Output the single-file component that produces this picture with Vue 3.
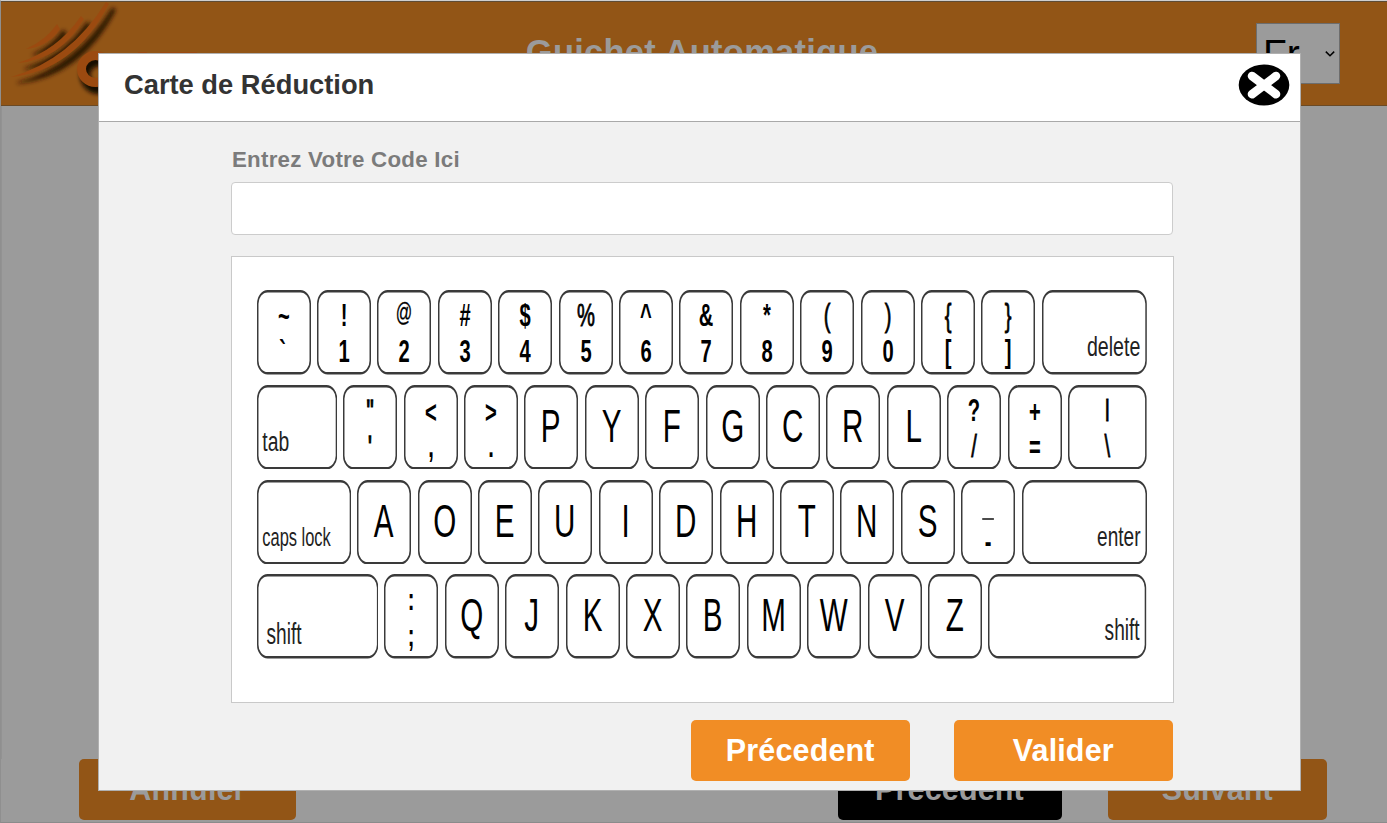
<script setup>
const KEY = 54
const BOARD = 890
const GAP = 6.4

const pair = (top, bottom, opts = {}) => ({ w: KEY, top, bottom, ...opts })
const letter = (char) => ({ w: KEY, char })
const wide = (w, label, opts = {}) => ({ w, label, size: 28, base: 65.8, x: 5.3, squeeze: 0.68, ...opts })
const right = (used) => BOARD - used
const medium = { weight: 'medium' }

const rows = [
  [
    pair('~', '`', { topBase: 37, bottomX: -1.3 }), pair('!', '1'),
    pair('@', '2', { weight: 'light', topSize: 25, topBase: 31 }), pair('#', '3'),
    pair('$', '4'), pair('%', '5', medium), pair('^', '6'), pair('&', '7'), pair('*', '8'),
    pair('(', '9', medium), pair(')', '0', medium), pair('{', '[', medium), pair('}', ']', medium),
    wide(right(13 * (KEY + GAP)), 'delete', { end: true, squeeze: 0.7 }),
  ],
  [
    wide(80.2, 'tab', { squeeze: 0.69 }),
    pair('"', "'", { weight: 'heavy', bottomWeight: 'heavy', topBase: 36.5, bottomBase: 73 }),
    pair('<', ',', { topBase: 38 }), pair('>', '.', { topBase: 38 }),
    ...[...'PYFGCRL'].map(letter),
    pair('?', '/', { bottomWeight: 'medium' }), pair('+', '=', { topBase: 37, bottomBase: 73 }),
    { ...pair('I', '\\', { weight: 'medium', bottomWeight: 'medium' }), w: right(80.2 + GAP + 12 * (KEY + GAP)) },
  ],
  [
    wide(94.2, 'caps lock', { size: 25.5, squeeze: 0.645 }),
    ...[...'AOEUIDHTNS'].map(letter),
    pair('_', '-', { weight: 'faint', topBase: 33.5 }),
    wide(right(94.2 + GAP + 11 * (KEY + GAP)), 'enter', { end: true }),
  ],
  [
    wide(121.4, 'shift', { x: 9.5, base: 70.5, size: 29, squeeze: 0.66 }),
    pair(':', ';'),
    ...[...'QJKXBMWVZ'].map(letter),
    wide(right(121.4 + GAP + 10 * (KEY + GAP)), 'shift', { end: true, size: 29, squeeze: 0.66 }),
  ],
]
</script>

<template>
  <div class="page">
    <header class="topbar">
      <svg class="logo" width="220" height="103" viewBox="0 2 220 103">
        <defs>
          <filter id="soft" x="-20%" y="-20%" width="140%" height="140%">
            <feGaussianBlur stdDeviation="2" />
          </filter>
          <g id="mark">
            <path d="M26 49 Q46 40 57 24 L60 29 Q48 47 26 49Z" />
            <path d="M18 63 Q58 50 81 16 L84 19 Q60 60 18 63Z" />
            <path d="M11 77 Q70 60 106 2 L109 4 Q74 71 11 77Z" />
          </g>
        </defs>
        <g fill="#2a1400" filter="url(#soft)">
          <use href="#mark" x="6.500" y="6" stroke="#2a1400" stroke-width="1" />
          <ellipse cx="99" cy="75" rx="14" ry="14" fill="none" stroke="#120800" stroke-width="10" />
        </g>
        <g fill="#9b4a10">
          <use href="#mark" />
          <ellipse cx="95.500" cy="69" rx="14" ry="13.500" fill="none" stroke="#9b4a10" stroke-width="9" />
          <rect x="138" y="52" width="9" height="8" />
          <rect x="160" y="52" width="37" height="8" />
        </g>
      </svg>
      <h1>Guichet Automatique</h1>
      <div class="lang">
        <span>Fr</span>
        <svg width="10" height="8" viewBox="0 0 10 8"><path d="M.8 1.600 L5 5.800 L9.200 1.600" fill="none" stroke="#000" stroke-width="1.500" /></svg>
      </div>
    </header>
    <main class="stage"></main>
    <footer class="actions">
      <button class="btn dim cancel">Annuler</button>
      <button class="btn dim dark">Précedent</button>
      <button class="btn dim next">Suivant</button>
    </footer>

    <section class="modal">
      <div class="modal-head">
        <h2>Carte de Réduction</h2>
        <svg class="close" width="52" height="42" viewBox="0 0 52 42">
          <ellipse cx="26" cy="21" rx="25.300" ry="20.500" fill="#000" />
          <path d="M14 12 L38 30.200 M38 12 L14 30.200" stroke="#fff" stroke-width="8.600" stroke-linecap="round" />
        </svg>
      </div>
      <div class="modal-body">
        <label for="code">Entrez Votre Code Ici</label>
        <input id="code" type="text" />
        <div class="keyboard">
          <div v-for="(row, r) in rows" :key="r" class="row">
            <svg
              v-for="(k, i) in row"
              :key="i"
              class="key"
              :width="k.w"
              height="84.5"
              :viewBox="`0 0 ${k.w} 84.5`"
            >
              <g transform="scale(.62 1)">
                <rect x="1.200" y="1.200" :width="k.w / 0.62 - 2.4" height="82.100" rx="16" ry="12.500" />
              </g>
              <text v-if="k.char" class="char" :transform="`translate(${k.w / 2 - 0.3} 57.2) scale(.63 1)`">{{ k.char }}</text>
              <text
                v-if="k.label"
                :class="['label', { end: k.end }]"
                :font-size="k.size"
                :transform="`translate(${k.end ? k.w - 6.5 : k.x} ${k.base}) scale(${k.squeeze} 1)`"
              >{{ k.label }}</text>
              <text
                v-if="k.top"
                :class="['sym', k.weight]"
                :font-size="k.topSize || 31"
                :transform="`translate(${k.w / 2} ${k.topBase || 35.5}) scale(.65 1)`"
              >{{ k.top }}</text>
              <text
                v-if="k.bottom"
                :class="['sym', k.bottomWeight]"
                font-size="31"
                :transform="`translate(${k.w / 2 + (k.bottomX || 0)} ${k.bottomBase || 71.6}) scale(.65 1)`"
              >{{ k.bottom }}</text>
            </svg>
          </div>
        </div>
        <div class="modal-actions">
          <button class="btn">Précedent</button>
          <button class="btn">Valider</button>
        </div>
      </div>
    </section>
  </div>
</template>

<style>
body {
  margin: 0;
  overflow: hidden;
}
</style>

<style scoped>
.page {
  position: relative;
  box-sizing: border-box;
  width: 1387px;
  height: 823px;
  display: flex;
  flex-direction: column;
  background: #9b9b9b;
  border-top: 1px solid #cfcfcf;
  border-left: 1px solid #8f8f8f;
  border-bottom: 1px solid #8b8b8b;
  font-family: "Liberation Sans", Arial, sans-serif;
  overflow: hidden;
}
.topbar {
  box-sizing: border-box;
  height: 105px;
  flex: none;
  display: grid;
  grid-template-columns: 1fr auto 1fr;
  background: #925516;
  border-top: 1px solid #5f4c35;
  border-bottom: 1px solid #6b4a25;
}
.logo {
  margin-left: -1px;
}
h1 {
  margin: 30px 0 0 16px;
  font-size: 34.500px;
  line-height: 40px;
  letter-spacing: 0.250px;
  color: #9b9b9b;
}
.lang {
  box-sizing: border-box;
  justify-self: end;
  width: 84px;
  height: 61px;
  margin: 21px 47px 0 0;
  padding: 0 4px 0 6px;
  border: 1px solid #6d6d6d;
  background: #9b9b9b;
  display: flex;
  align-items: center;
  justify-content: space-between;
  font-size: 39px;
}
.stage {
  flex: 1;
  border-left: 1px solid #929292;
}
.actions {
  display: flex;
  padding: 0 60px 2px 78px;
}
.btn {
  width: 219.500px;
  height: 61px;
  padding: 0 0 1px;
  border: 0;
  border-radius: 5px;
  background: #f18d25;
  color: #fff;
  font: bold 30.500px/60px "Liberation Sans", Arial, sans-serif;
  letter-spacing: 0.150px;
}
.dim {
  background: #925516;
  color: #9b9b9b;
}
.cancel {
  width: 217px;
}
.dark {
  width: 224px;
  margin-left: auto;
  margin-right: 46px;
  background: #000;
}
.modal {
  position: absolute;
  top: 52px;
  left: 97px;
  box-sizing: border-box;
  width: 1203px;
  height: 738px;
  border: 1px solid #b0b0b0;
  background: #f1f1f1;
}
.modal-head {
  box-sizing: border-box;
  height: 68px;
  padding: 0 10px 0 25px;
  display: flex;
  align-items: center;
  justify-content: space-between;
  background: #fff;
  border-bottom: 1px solid #a9a9a9;
}
h2 {
  margin: 0 0 6px;
  font-size: 27.300px;
  letter-spacing: 0;
  color: #333;
}
.close {
  margin-bottom: 5px;
}
.modal-body {
  padding: 25px 127px 0 132px;
  display: flex;
  flex-direction: column;
}
label {
  height: 35px;
  padding-left: 1px;
  font-size: 22.300px;
  font-weight: bold;
  line-height: 26px;
  letter-spacing: 0.250px;
  color: #7b7b7b;
}
input {
  box-sizing: border-box;
  width: 942px;
  height: 53px;
  border: 1px solid #ccc;
  border-radius: 4px;
  background: #fff;
}
.keyboard {
  box-sizing: border-box;
  width: 943px;
  height: 447px;
  margin-top: 21px;
  padding: 33px 0 0 24.700px;
  display: flex;
  flex-direction: column;
  gap: 10.300px;
  border: 1px solid #c9c9c9;
  background: #fff;
}
.row {
  display: flex;
  gap: 6.400px;
  height: 84.500px;
}
.key {
  flex: none;
  display: block;
}
.key rect {
  fill: #fff;
  stroke: #3a3a3a;
  stroke-width: 2.400px;
}
.key text {
  fill: #000;
}
.char {
  font-size: 47px;
  text-anchor: middle;
}
.key .label {
  fill: #222;
}
.end {
  text-anchor: end;
}
.sym {
  font-weight: bold;
  text-anchor: middle;
}
.light {
  font-weight: normal;
  stroke: #000;
  stroke-width: 0.300px;
}
.medium {
  font-weight: normal;
  stroke: #000;
  stroke-width: 0.800px;
}
.heavy {
  font-weight: normal;
  stroke: #000;
  stroke-width: 1.300px;
}
.faint {
  font-weight: normal;
  opacity: 0.7;
}
.modal-actions {
  display: flex;
  justify-content: flex-end;
  gap: 43.500px;
  margin-top: 17px;
}
</style>
